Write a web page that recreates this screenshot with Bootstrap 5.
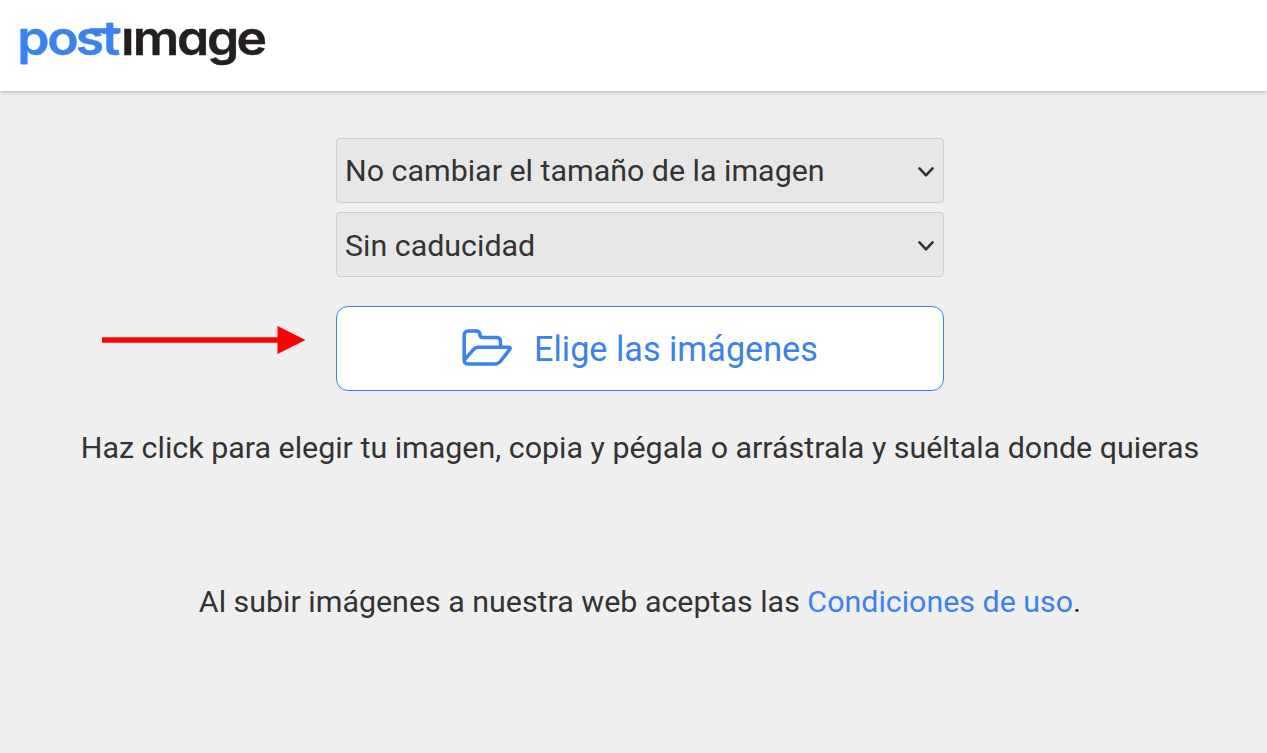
<!DOCTYPE html>
<html lang="es">

<head>
  <meta charset="utf-8">
  <meta name="viewport" content="width=device-width, initial-scale=1.0">
  <title>Postimage</title>
  <link href="https://cdn.jsdelivr.net/npm/bootstrap@5.3.3/dist/css/bootstrap.min.css" rel="stylesheet">
  <style>
    body {
      min-height: 100vh;
      background-color: #efefef;
      color: #333;
      font-family: Roboto, sans-serif;
      font-size: 30.4px;
      line-height: 40px;
      overflow: hidden;
    }

    .top-bar {
      height: 91px;
      padding: 0 20px;
      background-color: #fff;
      box-shadow: 0 1px 4px rgba(0, 0, 0, .26);
    }

    .logo {
      display: block;
      font-family: Inter, sans-serif;
      font-size: 47px;
      font-weight: 600;
      font-feature-settings: "cv11";
      overflow: visible;
    }

    .upload {
      padding: 47px 0 0 13px;
    }

    .upload-form {
      width: 608px;
    }

    .form-select {
      height: 65px;
      margin-bottom: 9px;
      padding: 0 40px 0 8px;
      border-color: #ccc;
      border-radius: 4px;
      background-color: #e7e7e7;
      background-image: url("data:image/svg+xml,%3csvg xmlns='http://www.w3.org/2000/svg' viewBox='0 0 16 10'%3e%3cpath fill='none' stroke='%23333' stroke-width='2.6' stroke-linecap='round' stroke-linejoin='round' d='M1.500 1.400 8 8.300l6.500-6.900'/%3e%3c/svg%3e");
      background-position: right 9px top 28px;
      background-size: 16px 10px;
      color: #333;
      font-size: 30.4px;
    }

    .select-expire {
      padding-top: 2px;
    }

    .btn-choose {
      height: 85px;
      margin-top: 29px;
      border: 1px solid #3b82ed;
      border-radius: 12px;
      background-color: #fff;
      color: #3b82ed;
      font-size: 34.2px;
    }

    .btn-choose svg {
      margin: 0 22px 2px 0;
    }

    .btn-choose span {
      padding-top: 3px;
    }

    .arrow {
      left: 102px;
      top: 326px;
    }

    .hint {
      margin: 37px 0 114px;
    }

    .terms a {
      color: #3b82ed;
    }
  </style>
</head>

<body>
  <header class="top-bar">
    <a href="#" class="d-inline-block text-decoration-none">
      <svg class="logo" width="246" height="70" viewBox="0 0 246 70">
        <g transform="scale(1.100 1)" stroke-width=".4">
          <text x="-2.500 24.800 50.700 74.500" y="54.800" fill="#3b82ed" stroke="#3b82ed">post</text>
          <text x="91.800 102.500 142.700 169.900 196.900" y="54.800" fill="#231f20" stroke="#231f20">ımage</text>
        </g>
        <!-- trazo que une la s con la t -->
        <rect x="70" y="28.200" width="30.500" height="4.800" fill="#3b82ed" />
      </svg>
    </a>
  </header>

  <main class="upload d-flex flex-column align-items-center">
    <form class="upload-form">
      <select class="form-select" aria-label="Tamaño">
        <option selected>No cambiar el tamaño de la imagen</option>
      </select>
      <select class="form-select select-expire" aria-label="Caducidad">
        <option selected>Sin caducidad</option>
      </select>
      <button type="button" class="btn btn-choose w-100 d-flex align-items-center justify-content-center">
        <svg width="50" height="38" viewBox="0 0 50 38" fill="none" stroke="currentColor" stroke-width="3.500" stroke-linejoin="round">
          <path d="M2.200 31V6.200Q2.200 1.900 6.500 1.900H14Q18 1.900 18 5.900V6Q18 8.500 20.500 8.500H34.500Q38.500 8.500 38.500 12.500V18.300" />
          <path d="M2.200 31 11.600 20.400Q13.400 18.300 16 18.300H46.500Q49.200 18.300 47.500 20.600L38.800 32Q36.400 35 33 35H6.500Q2.200 35 2.200 31Z" />
        </svg>
        <span>Elige las imágenes</span>
      </button>
    </form>
    <p class="hint text-nowrap">Haz click para elegir tu imagen, copia y pégala o arrástrala y suéltala donde quieras</p>
    <p class="terms mb-0 text-nowrap">Al subir imágenes a nuestra web aceptas las <a href="#" class="text-decoration-none">Condiciones de uso</a>.</p>
  </main>

  <!-- Flecha que señala el botón -->
  <svg class="arrow position-absolute" width="204" height="28" viewBox="0 0 204 28" fill="#f00">
    <path d="M0 11.300H176V16.700H0z" />
    <path d="M175.500 0 203.500 14 175.500 28z" />
  </svg>

  <script src="https://cdn.jsdelivr.net/npm/bootstrap@5.3.3/dist/js/bootstrap.bundle.min.js"></script>
</body>

</html>
